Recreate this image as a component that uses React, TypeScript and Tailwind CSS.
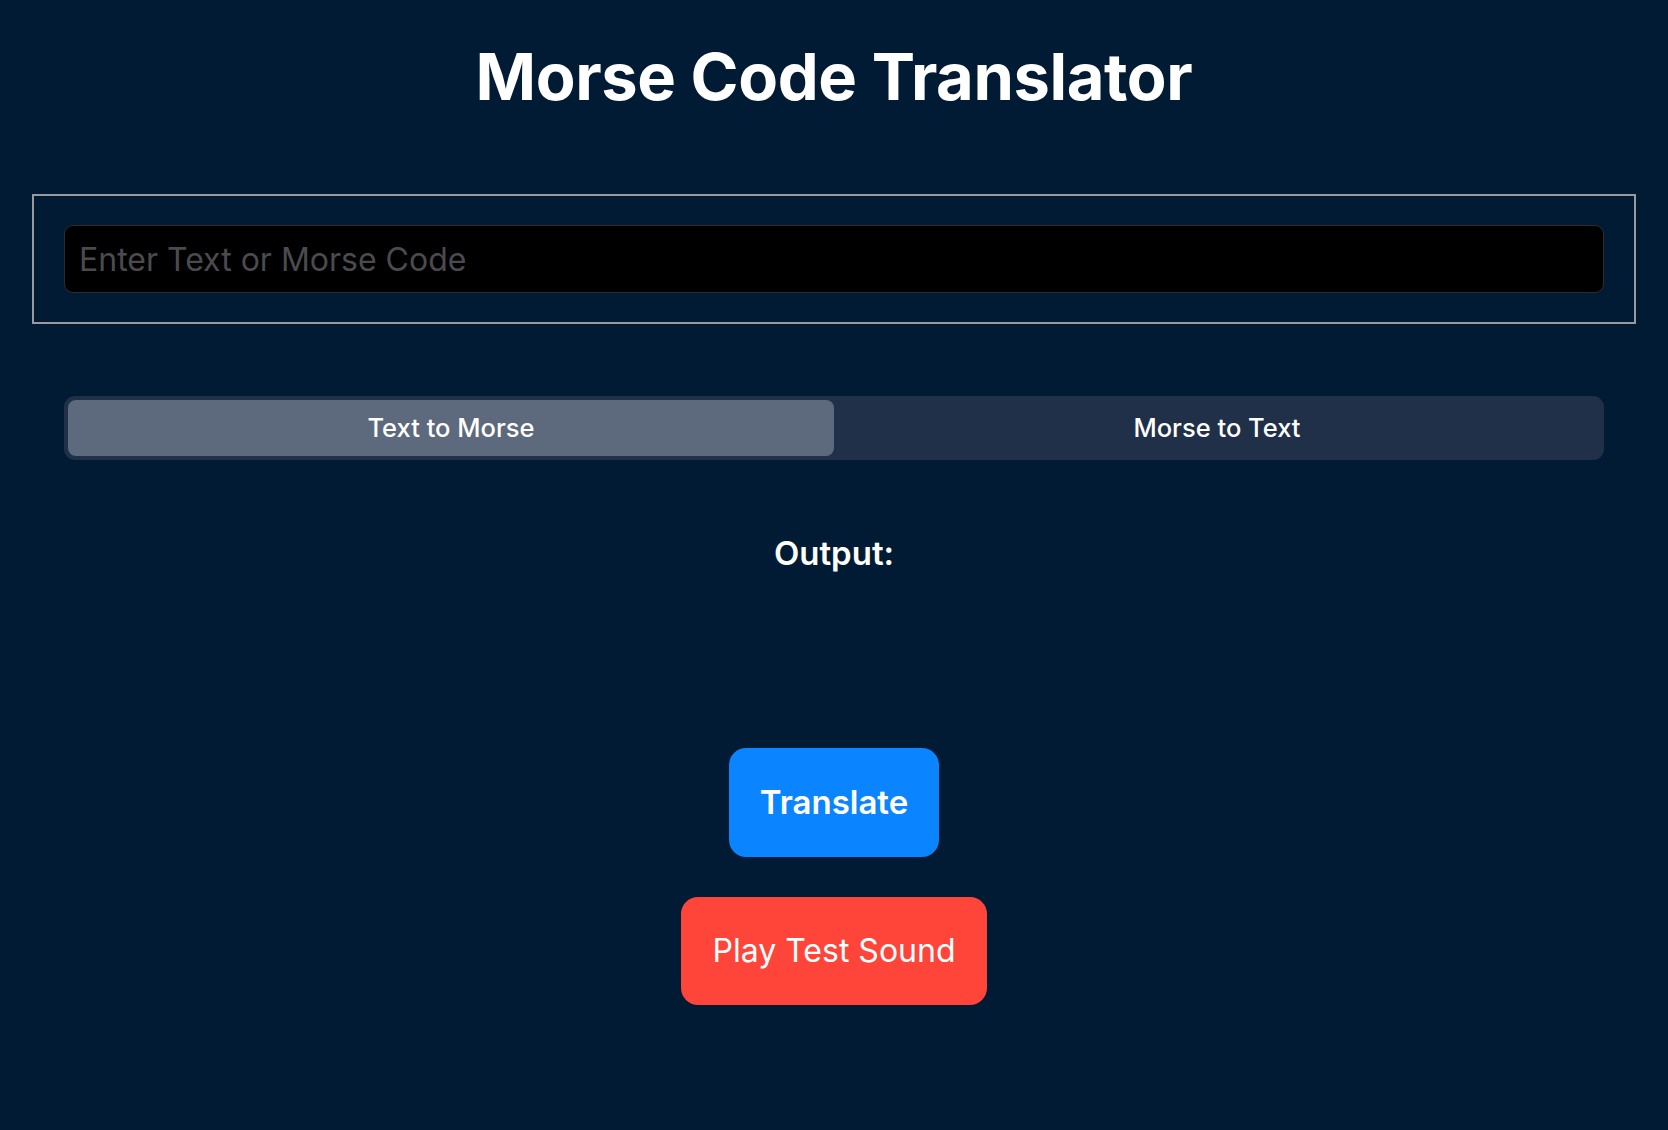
import React, { useState } from 'react';

const App: React.FC = () => {
  const [mode, setMode] = useState<'toMorse' | 'toText'>('toMorse');
  const [input, setInput] = useState('');

  return (
    <div
      className="min-h-screen w-full bg-[#021b35] text-white flex flex-col"
      style={{ fontFamily: 'Inter, "Noto Sans", sans-serif' }}
    >
      {/* Title */}
      <h1 className="mt-[44px] text-center text-[65px] leading-none font-bold tracking-[-0.4px]">
        Morse Code Translator
      </h1>

      {/* Input box */}
      <div className="mt-[85px] mx-[32px] border-2 border-[#9a9a9e] py-[29px] px-[30px]">
        <input
          value={input}
          onChange={(e) => setInput(e.target.value)}
          placeholder="Enter Text or Morse Code"
          className="w-full h-[68px] bg-black rounded-[9px] border border-[#2c2c2e] px-[14px] text-[32px] text-white placeholder:text-[#4b4b4f] outline-none"
        />
      </div>

      {/* Mode switch */}
      <div className="mt-[72px] mx-[64px] h-[64px] bg-[#1f3048] rounded-[11px] p-[4px] flex">
        <button
          onClick={() => setMode('toMorse')}
          className={`flex-1 rounded-[8px] text-[25.5px] font-medium ${
            mode === 'toMorse' ? 'bg-[#5d697c]' : ''
          }`}
        >
          Text to Morse
        </button>
        <button
          onClick={() => setMode('toText')}
          className={`flex-1 rounded-[8px] text-[25.5px] font-medium ${
            mode === 'toText' ? 'bg-[#5d697c]' : ''
          }`}
        >
          Morse to Text
        </button>
      </div>

      {/* Output */}
      <p className="mt-[77px] text-center text-[33px] leading-none font-semibold">Output:</p>

      {/* Actions */}
      <div className="mt-[178px] flex flex-col items-center gap-[40px]">
        <button className="bg-[#0a84ff] rounded-[17px] px-[31px] py-[38px] text-[33px] leading-none font-semibold">
          Translate
        </button>
        <button className="bg-[#ff453a] rounded-[17px] px-[32px] py-[38px] text-[32px] leading-none">
          Play Test Sound
        </button>
      </div>
    </div>
  );
};

export default App;
